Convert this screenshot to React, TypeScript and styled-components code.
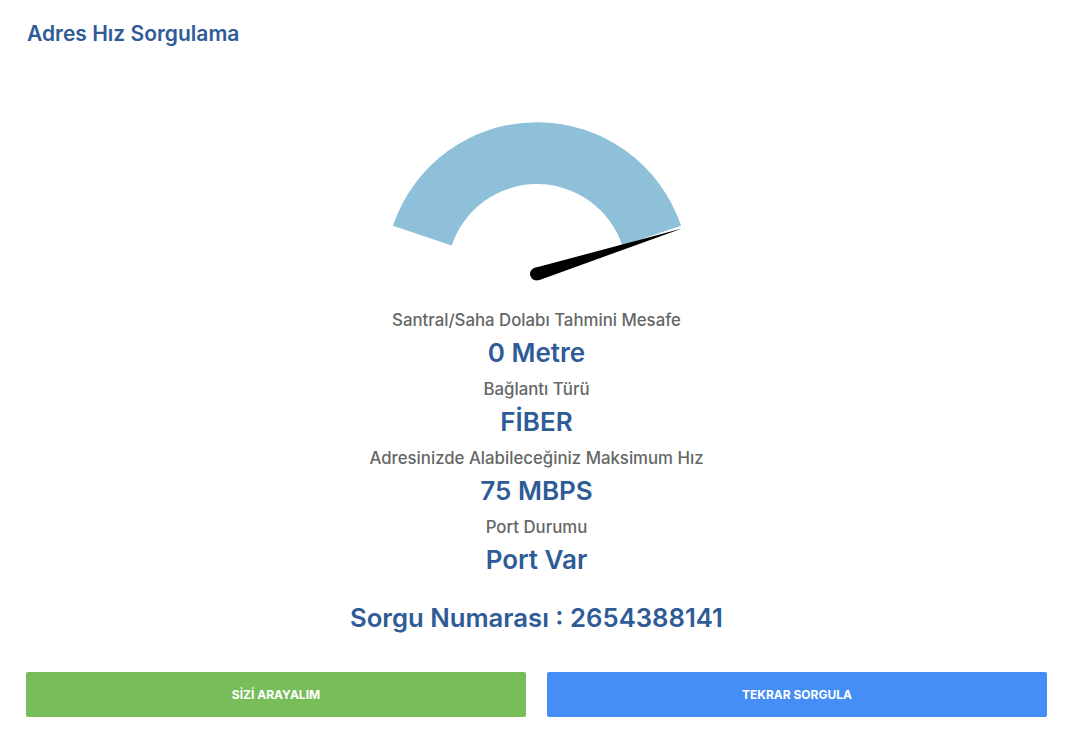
import React from "react";
import styled, { createGlobalStyle } from "styled-components";

const GlobalStyle = createGlobalStyle`
  html, body { margin: 0; padding: 0; background: #ffffff; }
  body { font-family: "Inter", "Lato", sans-serif; }
`;

const Page = styled.div`
  width: 1077px;
  height: 747px;
  box-sizing: border-box;
  padding: 21px 30px 0 26px;
  display: flex;
  flex-direction: column;
`;

const Title = styled.h1`
  margin: 0 0 0 1px;
  font-size: 21px;
  line-height: 26px;
  font-weight: 600;
  color: #2f5b97;
`;

const Result = styled.div`
  display: flex;
  flex-direction: column;
  align-items: center;
  margin-top: 63px;
`;

const Gauge = styled.svg`
  display: block;
  width: 320px;
  height: 180px;
  margin-bottom: 20px;
`;

const InfoRow = styled.div`
  display: flex;
  flex-direction: column;
  align-items: center;
  margin-bottom: 3px;
`;

const Label = styled.div`
  font-size: 16.8px;
  line-height: 20px;
  color: #666666;
  font-weight: 500;
`;

const Value = styled.div`
  font-size: 26px;
  line-height: 46px;
  color: #2f5b97;
  font-weight: 600;
`;

const QueryNumber = styled.div`
  margin-top: 14px;
  font-size: 25.7px;
  line-height: 36px;
  color: #2f5b97;
  font-weight: 600;
`;

const Buttons = styled.div`
  display: grid;
  grid-template-columns: 1fr 1fr;
  gap: 21px;
  margin-top: 36px;
`;

const ActionButton = styled.button<{ $color: string }>`
  height: 45px;
  border: none;
  border-radius: 2px;
  background: ${(p) => p.$color};
  color: #ffffff;
  font-family: "Inter", "Lato", sans-serif;
  font-size: 12px;
  font-weight: 700;
  cursor: pointer;
`;

const rows = [
  { label: "Santral/Saha Dolabı Tahmini Mesafe", value: "0 Metre" },
  { label: "Bağlantı Türü", value: "FİBER" },
  { label: "Adresinizde Alabileceğiniz Maksimum Hız", value: "75 MBPS" },
  { label: "Port Durumu", value: "Port Var" },
];

export default function App() {
  return (
    <>
      <GlobalStyle />
      <Page>
        <Title>Adres Hız Sorgulama</Title>
        <Result>
          <Gauge viewBox="0 0 320 180">
            <path
              d="M 15.9 115.8 A 152 152 0 0 1 304.1 115.8 L 245.3 135.4 A 90 90 0 0 0 74.7 135.4 Z"
              fill="#8fc0d9"
            />
            <polygon points="305,118.5 161.9,170.2 158.1,157.8" fill="#000000" />
            <circle cx="159.5" cy="164" r="6.5" fill="#000000" />
          </Gauge>
          {rows.map((r) => (
            <InfoRow key={r.label}>
              <Label>{r.label}</Label>
              <Value>{r.value}</Value>
            </InfoRow>
          ))}
          <QueryNumber>Sorgu Numarası : 2654388141</QueryNumber>
        </Result>
        <Buttons>
          <ActionButton $color="#77bd5a">SİZİ ARAYALIM</ActionButton>
          <ActionButton $color="#448ef6">TEKRAR SORGULA</ActionButton>
        </Buttons>
      </Page>
    </>
  );
}
